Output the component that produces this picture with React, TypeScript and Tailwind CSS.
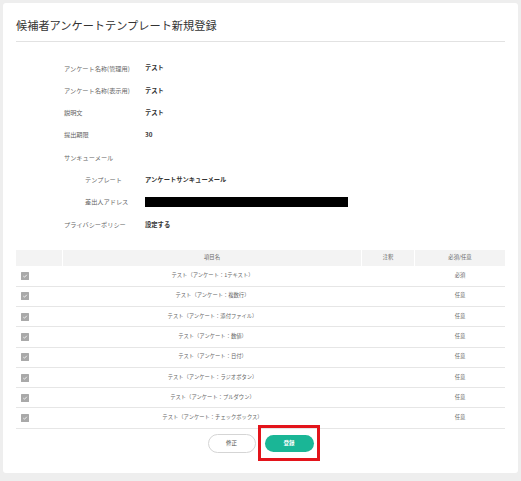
import React from 'react';

const font = { fontFamily: '"Noto Sans CJK JP", "Noto Sans", sans-serif' };

const fields: { label: string; value?: string; indent?: boolean; redacted?: boolean }[] = [
  { label: 'アンケート名称(管理用)', value: 'テスト' },
  { label: 'アンケート名称(表示用)', value: 'テスト' },
  { label: '説明文', value: 'テスト' },
  { label: '提出期限', value: '30' },
  { label: 'サンキューメール' },
  { label: 'テンプレート', value: 'アンケートサンキューメール', indent: true },
  { label: '差出人アドレス', indent: true, redacted: true },
  { label: 'プライバシーポリシー', value: '設定する' },
];

const items = [
  ['テスト（アンケート：1テキスト）', '必須'],
  ['テスト（アンケート：複数行）', '任意'],
  ['テスト（アンケート：添付ファイル）', '任意'],
  ['テスト（アンケート：数値）', '任意'],
  ['テスト（アンケート：日付）', '任意'],
  ['テスト（アンケート：ラジオボタン）', '任意'],
  ['テスト（アンケート：プルダウン）', '任意'],
  ['テスト（アンケート：チェックボックス）', '任意'],
];

function CheckBox() {
  return (
    <svg width="8" height="8" viewBox="0 0 8 8" aria-hidden="true">
      <rect width="8" height="8" rx="0.5" fill="#a9a9a9" />
      <path d="M2.3 4.1L3.5 5.2L5.8 2.8" stroke="#fff" strokeWidth="0.8" fill="none" />
    </svg>
  );
}

export default function App() {
  return (
    <div className="min-h-[481px] w-full bg-[#eeeeee] px-[3px] pt-[3px] pb-[8px]" style={font}>
      <div className="rounded-[3px] bg-white px-[13px] pt-[14px] pb-[20px]">
        {/* Title */}
        <h1 className="text-[11.2px] leading-[17px] font-normal text-[#333]">
          候補者アンケートテンプレート新規登録
        </h1>
        <div className="mt-[7px] h-px bg-[#e2e2e2]" />

        {/* Form rows */}
        <div className="mt-[15px] flex flex-col">
          {fields.map((f) => (
            <div key={f.label} className="flex h-[22.3px] items-center">
              <div
                className={`${f.indent ? 'pl-[69px]' : 'pl-[48px]'} w-[129px] shrink-0 text-[6.2px] text-[#666]`}
              >
                {f.label}
              </div>
              {f.redacted ? (
                <div className="h-[10px] w-[203px] bg-black" />
              ) : (
                <div className="text-[6.3px] font-bold text-[#333]">{f.value}</div>
              )}
            </div>
          ))}
        </div>

        {/* Item table */}
        <div className="mt-[15px] grid grid-cols-[47px_299px_53px_1fr] text-[5.3px] text-[#666]">
          <div className="h-[16px] border-r border-white bg-[#f3f3f3]" />
          <div className="flex h-[16px] items-center justify-center border-r border-white bg-[#f3f3f3]">
            項目名
          </div>
          <div className="flex h-[16px] items-center justify-center border-r border-white bg-[#f3f3f3]">
            注釈
          </div>
          <div className="flex h-[16px] items-center justify-center bg-[#f3f3f3]">必須/任意</div>
          {items.map(([name, req]) => (
            <React.Fragment key={name}>
              <div className="flex h-[20.3px] items-center border-b border-[#e6e6e6] pl-[5px]">
                <CheckBox />
              </div>
              <div className="flex h-[20.3px] items-center justify-center border-b border-[#e6e6e6]">
                {name}
              </div>
              <div className="h-[20.3px] border-b border-[#e6e6e6]" />
              <div className="flex h-[20.3px] items-center justify-center border-b border-[#e6e6e6]">
                {req}
              </div>
            </React.Fragment>
          ))}
        </div>

        {/* Buttons */}
        <div className="mt-[5px] flex items-center justify-center gap-[9px]">
          <button className="h-[19px] w-[48px] rounded-full border border-[#d5d5d5] bg-white text-[5.5px] text-[#555]">
            修正
          </button>
          <div className="relative flex">
            <button className="h-[17px] w-[49px] rounded-full bg-[#1ab696] text-[5.5px] font-bold text-white">
              登録
            </button>
            <div className="pointer-events-none absolute -top-[10px] -right-[6px] -bottom-[9px] -left-[7px] border-[3px] border-[#e3141b]" />
          </div>
        </div>
      </div>
    </div>
  );
}
